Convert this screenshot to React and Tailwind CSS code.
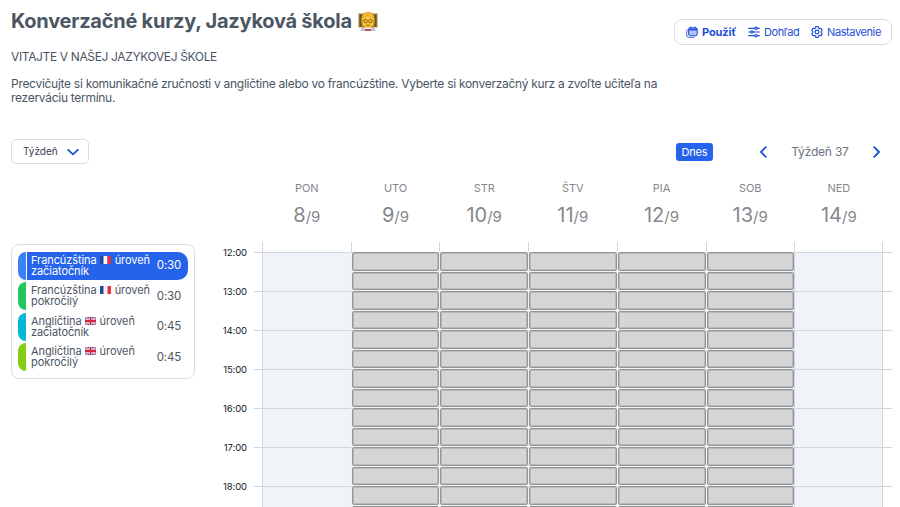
import clsx from 'clsx';

const days = [
  { name: 'PON', day: 8, open: false },
  { name: 'UTO', day: 9, open: true },
  { name: 'STR', day: 10, open: true },
  { name: 'ŠTV', day: 11, open: true },
  { name: 'PIA', day: 12, open: true },
  { name: 'SOB', day: 13, open: true },
  { name: 'NED', day: 14, open: false },
];

const hours = ['12:00', '13:00', '14:00', '15:00', '16:00', '17:00', '18:00'];

const courses = [
  { lang: 'Francúzština', flag: 'fr', level: 'začiatočník', time: '0:30', color: 'bg-[#3b82f6]', active: true },
  { lang: 'Francúzština', flag: 'fr', level: 'pokročilý', time: '0:30', color: 'bg-[#22c55e]' },
  { lang: 'Angličtina', flag: 'gb', level: 'začiatočník', time: '0:45', color: 'bg-[#06b6d4]' },
  { lang: 'Angličtina', flag: 'gb', level: 'pokročilý', time: '0:45', color: 'bg-[#84cc16]' },
];

function Flag({ code }) {
  return (
    <svg viewBox="0 0 22 16" className="mx-[3.500px] inline-block h-[8px] w-[11px] align-[0px]">
      {code === 'fr' ? (
        <>
          <rect width="8" height="16" fill="#1f4b9b" />
          <rect x="7" width="8" height="16" fill="#f4f4f4" />
          <rect x="15" width="7" height="16" fill="#e0333c" />
        </>
      ) : (
        <>
          <rect width="22" height="16" fill="#2b4a94" />
          <path d="M0 0l22 16M22 0L0 16" stroke="#f1e9ee" strokeWidth="4" />
          <path d="M0 0l22 16M22 0L0 16" stroke="#d0324a" strokeWidth="1.6" />
          <path d="M11 0v16M0 8h22" stroke="#f1e9ee" strokeWidth="6" />
          <path d="M11 0v16M0 8h22" stroke="#d0243c" strokeWidth="3.6" />
        </>
      )}
    </svg>
  );
}

function Teacher() {
  return (
    <svg viewBox="0 0 20 20" className="h-5 w-5">
      <rect x="0.5" y="2.500" width="19" height="14" fill="#a9782f" />
      <rect x="1.8" y="3.800" width="16.4" height="11.500" fill="#4c5a35" />
      <path d="M2.500 20c0-3 2.500-4.500 7.500-4.500s7.500 1.500 7.500 4.500z" fill="#a9cbe6" />
      <path d="M7 16h6v4H7z" fill="#fff" />
      <path d="M7 18h6v2H7z" fill="#d8404a" />
      <path d="M3.200 10C3 4 5.500 1 10 1s7 3 6.800 9c0 3-.5 5-2 6.500H5.200C3.700 15 3.200 13 3.200 10z" fill="#dc9a1c" />
      <ellipse cx="10" cy="10.800" rx="5.300" ry="5.700" fill="#ffc83d" />
      <path d="M4 9.500C4.500 7 7 6 9.500 4c1 2.500 4 3 6.500 5.500C16.500 4 14 1 10 1S3.500 4 4 9.500z" fill="#f2b535" />
      <g fill="none" stroke="#70491a" strokeWidth="0.9">
        <circle cx="7.600" cy="10.200" r="1.700" />
        <circle cx="12.400" cy="10.200" r="1.700" />
        <path d="M8 14q2 1.200 4 0" />
      </g>
    </svg>
  );
}

function CalendarsIcon() {
  return (
    <svg viewBox="0 0 12 12" className="h-3 w-3" fill="none" stroke="currentColor">
      <path d="M2 3.500C.9 4 .7 5 .7 6v3c0 1.500.6 2.300 2 2.300h4.500c1 0 1.700-.3 2-.9" strokeWidth="0.9" />
      <rect x="2.500" y="1.700" width="8.800" height="8" rx="1.700" fill="currentColor" fillOpacity="0.45" strokeWidth="0.9" />
      <path d="M2.600 3.500h8.600" strokeWidth="1.600" />
      <path d="M4.800.5v2M9 .5v2" strokeWidth="1" />
      <path d="M4.700 5v4M6.900 5v4M9.100 5v4" stroke="#fff" strokeWidth="0.500" />
    </svg>
  );
}

function SlidersIcon() {
  return (
    <svg viewBox="0 0 12 12" className="h-3 w-3" fill="none" stroke="currentColor" strokeWidth="1.200" strokeLinecap="round">
      <path d="M.8 2.300h5.700M9.200 2.300h2.100M.8 6h1.900M5.400 6h5.900M.8 9.700h5.700M9.200 9.700h2.100" />
      <circle cx="7.900" cy="2.300" r="1.200" />
      <circle cx="4" cy="6" r="1.200" />
      <circle cx="7.900" cy="9.700" r="1.200" />
    </svg>
  );
}

function GearIcon() {
  return (
    <svg viewBox="2 2 20 20" className="h-3 w-3" fill="none" stroke="currentColor" strokeWidth="1.900" strokeLinejoin="round">
      <path d="M9.594 3.940c.09-.542.560-.940 1.110-.940h2.593c.55 0 1.020.398 1.110.940l.213 1.281c.063.374.313.686.645.870.074.040.147.083.220.127.325.196.720.257 1.075.124l1.217-.456a1.125 1.125 0 0 1 1.370.490l1.296 2.247a1.125 1.125 0 0 1-.260 1.431l-1.003.827c-.293.241-.438.613-.430.992a7.723 7.723 0 0 1 0 .255c-.008.378.137.750.430.991l1.004.827c.424.350.534.955.260 1.430l-1.298 2.247a1.125 1.125 0 0 1-1.369.491l-1.217-.456c-.355-.133-.750-.072-1.076.124a6.470 6.470 0 0 1-.220.128c-.331.183-.581.495-.644.869l-.213 1.281c-.090.543-.560.940-1.110.940h-2.594c-.550 0-1.019-.398-1.110-.940l-.213-1.281c-.062-.374-.312-.686-.644-.870a6.520 6.520 0 0 1-.220-.127c-.325-.196-.720-.257-1.076-.124l-1.217.456a1.125 1.125 0 0 1-1.369-.490l-1.297-2.247a1.125 1.125 0 0 1 .260-1.431l1.004-.827c.292-.240.437-.613.430-.991a6.932 6.932 0 0 1 0-.255c.007-.380-.138-.751-.430-.992l-1.004-.827a1.125 1.125 0 0 1-.260-1.430l1.297-2.247a1.125 1.125 0 0 1 1.370-.491l1.216.456c.356.133.751.072 1.076-.124.072-.044.146-.086.220-.128.332-.183.582-.495.644-.869z" />
      <circle cx="12" cy="12" r="3.200" />
    </svg>
  );
}

function Chevron({ d, className }) {
  return (
    <svg viewBox="0 0 12 12" className={className} fill="none" stroke="currentColor" strokeWidth="1.800" strokeLinecap="round" strokeLinejoin="round">
      <path d={d} />
    </svg>
  );
}

function Toolbar() {
  return (
    <nav className="mt-[19px] mr-[8px] flex h-[26px] w-[218px] items-center rounded-lg border border-[#d9dce1] pl-[11px] text-[11px] text-[#1d4ed8]">
      <span className="flex w-[62px] items-center gap-[4px] font-bold tracking-[-0.100px]"><CalendarsIcon />Použiť</span>
      <span className="flex w-[63px] items-center gap-[4px] tracking-[-0.400px]"><SlidersIcon />Dohľad</span>
      <span className="flex items-center gap-[4px] tracking-[-0.400px]"><GearIcon />Nastavenie</span>
    </nav>
  );
}

function CourseList() {
  return (
    <ul className="mt-[69px] ml-[11px] flex h-[135px] w-[184px] shrink-0 flex-col gap-[2.400px] rounded-lg border border-[#d9dce1] px-[6px] pt-[7px]">
      {courses.map((c) => (
        <li key={c.lang + c.level} className="flex h-[28px] shrink-0 gap-px">
          <span className={clsx('w-[8px] rounded-l-[10px]', c.color)} />
          <div
            className={clsx(
              'flex flex-1 items-center justify-between rounded-r-[10px] pr-[7px] pl-[4px] whitespace-nowrap',
              c.active ? 'bg-[#2563eb] text-white' : 'text-[#4b5563]'
            )}
          >
            <p className="text-[11px] leading-[11px] tracking-[-0.080px]">
              {c.lang}<Flag code={c.flag} />úroveň
              <br />
              {c.level}
            </p>
            <span className="text-[11.500px] tracking-[-0.200px]">{c.time}</span>
          </div>
        </li>
      ))}
    </ul>
  );
}

function Calendar() {
  return (
    <section className="flex flex-1 flex-col">
      <div className="mr-[16.500px] ml-[67.500px] grid h-[67px] w-[620.700px] grid-cols-7 text-center text-[#85878c]">
        {days.map((d) => (
          <div key={d.name} className="pt-[5px]">
            <div className="text-[11px] leading-4 tracking-[-0.100px]">{d.name}</div>
            <div className="mt-[5px] text-[20px] leading-7">
              {d.day}<span className="text-[15px]">/9</span>
            </div>
          </div>
        ))}
      </div>

      <div className="flex">
        <div className="w-[52px] pt-[5px] text-right text-[9.500px] tracking-[-0.100px] text-[#111827]">
          {hours.map((h) => (
            <div key={h} className="h-[39px] leading-[12px]">{h}</div>
          ))}
        </div>
        <div className="ml-[7px] grid h-[300px] w-[638px] overflow-hidden">
          <div className="col-start-1 row-start-1 ml-[8px] grid w-[621px] grid-cols-7">
            {days.map((d) => (
              <div key={d.name} className="border-l border-[#d0d7dc] pt-[10px] last:border-r">
                <div className={clsx('h-full', !d.open && 'bg-[#f0f4f8]')} />
              </div>
            ))}
          </div>
          <div className="col-start-1 row-start-1 pt-[10px]">
            {hours.map((h) => (
              <div key={h} className="h-[39px] border-t border-[#d0d7dc]" />
            ))}
          </div>
          <div className="col-start-1 row-start-1 ml-[8px] grid w-[621px] grid-cols-7 pt-[10px]">
            {days.map((d) => (
              <div key={d.name} className="flex flex-col">
                {d.open &&
                  hours.concat(hours).map((h, i) => (
                    <div key={i} className="flex h-[19.500px] shrink-0 bg-[#f1f2f2] pl-[1px]">
                      <div className="h-[18.700px] flex-1 rounded-[2px] border border-[#929595] bg-[#d5d5d5] shadow-[inset_0_0_0_1px_#b9bbbb]" />
                    </div>
                  ))}
              </div>
            ))}
          </div>
        </div>
      </div>
    </section>
  );
}

export default function App() {
  return (
    <div className="flex h-[507px] w-[900px] flex-col overflow-hidden bg-white font-['Inter',sans-serif]">
      <header className="flex h-[139px] shrink-0 justify-between">
        <div className="w-[660px] pl-[11px] text-[#4b5563]">
          <h1 className="flex items-center gap-[6px] pt-[7px] text-[20px] leading-7 font-bold tracking-[-0.250px]">
            Konverzačné kurzy, Jazyková škola
            <Teacher />
          </h1>
          <p className="mt-[15px] text-[12px] leading-[14px] tracking-[-0.360px]">VITAJTE V NAŠEJ JAZYKOVEJ ŠKOLE</p>
          <p className="mt-[13px] text-[12px] leading-[14px] tracking-[-0.285px] whitespace-nowrap">
            Precvičujte si komunikačné zručnosti v angličtine alebo vo francúzštine. Vyberte si konverzačný kurz a zvoľte učiteľa na
            <br />
            rezerváciu termínu.
          </p>
        </div>
        <Toolbar />
      </header>

      <div className="flex h-[36px] shrink-0 items-start">
        <button className="ml-[11px] flex h-[25px] w-[78px] items-center justify-between rounded-[5px] border border-[#d9dce1] pr-[9px] pl-[11px] text-[10px] text-[#374151]">
          Týždeň
          <Chevron d="M1.200 3.800L6 8.400l4.800-4.600" className="h-3 w-3 text-[#1d4ed8]" />
        </button>
        <button className="mt-[4px] ml-[587px] h-[18px] w-[37px] rounded-[3px] bg-[#2563eb] text-[11px] leading-[18px] tracking-[-0.200px] text-white">Dnes</button>
        <div className="ml-[44px] flex h-[26px] flex-1 items-center text-[12px] tracking-[-0.200px] text-[#6b7280]">
          <Chevron d="M8.800 1.200L4 6l4.800 4.800" className="h-3 w-3 text-[#1d4ed8]" />
          <span className="w-[102px] text-center">Týždeň 37</span>
          <Chevron d="M3.200 1.200L8 6l-4.800 4.800" className="h-3 w-3 text-[#1d4ed8]" />
        </div>
      </div>

      <main className="flex shrink-0">
        <CourseList />
        <Calendar />
      </main>
    </div>
  );
}
